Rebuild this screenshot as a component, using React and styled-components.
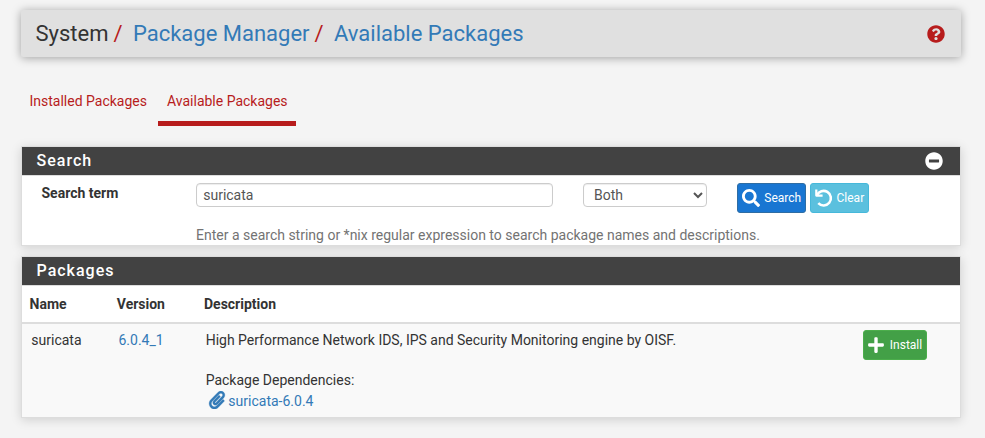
import React from "react";
import styled, { createGlobalStyle } from "styled-components";
import {
  FaQuestionCircle,
  FaMinusCircle,
  FaSearch,
  FaPlus,
  FaPaperclip,
} from "react-icons/fa";

const GlobalStyle = createGlobalStyle`
  *, *::before, *::after { box-sizing: border-box; }
  body {
    margin: 0;
    background: #f4f4f4;
    color: #333;
    font: 14px/20px Roboto, sans-serif;
  }
  a { color: #337ab7; text-decoration: none; }
  svg { display: block; flex: none; }
`;

const Page = styled.main`
  height: 438px;
  padding: 10px 24px 0 21px;
  overflow: hidden;
`;

const Header = styled.header`
  display: flex;
  align-items: center;
  justify-content: space-between;
  height: 47px;
  padding: 0 16px 0 14.5px;
  border-radius: 2px;
  background: #e0e0e0;
  box-shadow: 0 1px 10px rgba(0, 0, 0, 0.35);
`;

const Breadcrumb = styled.nav`
  display: flex;
  font-size: 22px;
  line-height: 26px;
`;

const Slash = styled.span`
  margin: 0 10.4px 0 5px;
  color: #b71c1c;
`;

const HelpLink = styled.a`
  color: #b71c1c;
  font-size: 18px;
`;

const Tabs = styled.nav`
  display: flex;
  margin-top: 24px;
`;

const Tab = styled.a`
  height: 45px;
  padding: 10px 8.5px 0;
  border-bottom: 5px solid ${(p) => (p.$active ? "#b71c1c" : "transparent")};
  color: #b71c1c;
  & + & { margin-left: 2.5px; padding: 10px 8px 0 9px; }
`;

const Panel = styled.section`
  height: ${(p) => p.$height}px;
  margin-top: ${(p) => p.$gap}px;
  border: 1px solid #ddd;
  background: #fff;
  box-shadow: 0 2px 10px rgba(0, 0, 0, 0.15);
`;

const PanelHeading = styled.div`
  display: flex;
  align-items: center;
  justify-content: space-between;
  height: 29px;
  padding: 0 16.7px 1px 14.5px;
  border-bottom: 1px solid #ddd;
  background: #424242;
  background-clip: padding-box;
  color: #fff;
  font-size: 18px;
`;

const PanelTitle = styled.h2`
  margin: 0;
  font-size: 16px;
  line-height: 20px;
  font-weight: 500;
  letter-spacing: 1px;
`;

const SearchRow = styled.form`
  display: grid;
  grid-template-columns: 154.5px 357px 124px auto;
  column-gap: 0;
  align-items: start;
  padding: 7px 0 0 19.5px;
`;

const Label = styled.label`
  font-weight: 700;
`;

const TextInput = styled.input`
  width: 357px;
  height: 24px;
  padding: 0 6.2px;
  border: 1px solid #ccc;
  border-radius: 4px;
  background: #fff;
  box-shadow: inset 0 1px 1px rgba(0, 0, 0, 0.075);
  color: #555;
  font: inherit;
  outline: none;
`;

const Select = styled.select`
  width: 124px;
  height: 24px;
  margin-left: 30px;
  padding: 0 0 0 6px;
  border: 1px solid #ccc;
  border-radius: 4px;
  background: #fff;
  box-shadow: inset 0 1px 1px rgba(0, 0, 0, 0.075);
  color: #555;
  font: inherit;
`;

const ButtonGroup = styled.div`
  display: flex;
  gap: 4px;
  margin-left: 60px;
`;

const tones = {
  primary: ["#1976d2", "#2e6da4"],
  info: ["#5bc0de", "#46b8da"],
  success: ["#43a047", "#4cae4c"],
};

const Button = styled.button`
  display: flex;
  align-items: center;
  justify-content: space-between;
  width: ${(p) => p.$width}px;
  height: 30px;
  padding: 0 3.8px 0 ${(p) => p.$inset ?? 4}px;
  border: 1px solid ${(p) => tones[p.$tone][1]};
  border-radius: 3px;
  background: ${(p) => tones[p.$tone][0]};
  color: #fff;
  font: 12px/18px Roboto, sans-serif;
  svg { font-size: 18px; }
`;

const UndoSvg = styled.svg`
  width: 18px;
  height: 18px;
  overflow: visible;
  fill: none;
  stroke: currentColor;
  stroke-width: 2.6px;
`;

const UndoIcon = () => (
  <UndoSvg viewBox="0 0 18 18" aria-hidden="true">
    <path d="M1.9 6.2A7.3 7.3 0 1 1 3.3 14.2" />
    <path d="M1.3 0.4V6.6H7.6" strokeWidth="2.2" strokeLinejoin="round" />
  </UndoSvg>
);

const ClipIcon = styled(FaPaperclip)`
  stroke: currentColor;
  stroke-width: 8px;
`;

const HelpText = styled.p`
  grid-column: 2 / -1;
  margin: 12px 0 0;
  color: #737373;
`;

const Columns = styled.div`
  display: grid;
  grid-template-columns: 87.2px 87.2px 1fr auto;
`;

const HeadRow = styled(Columns)`
  height: 38px;
  padding: 8px 8px 0 7.6px;
  border-bottom: 2px solid #ddd;
  font-weight: 700;
`;

const PackageRow = styled(Columns)`
  align-items: start;
  height: 93px;
  padding: 6px 33px 0 9.3px;
  background: #f9f9f9;
`;

const Description = styled.div`
  p { margin: 0 0 20px; }
`;

const Dependency = styled.a`
  display: flex;
  align-items: center;
  gap: 2.7px;
  padding: 1px 0 0 2px;
  svg { font-size: 18px; margin-top: -3px; }
`;

export default function App() {
  return (
    <Page>
      <GlobalStyle />
      <Header>
        <Breadcrumb>
          <span>System</span>
          <Slash>/</Slash>
          <a href="#manager">Package Manager</a>
          <Slash>/</Slash>
          <a href="#available">Available Packages</a>
        </Breadcrumb>
        <HelpLink href="#help" aria-label="Help"><FaQuestionCircle /></HelpLink>
      </Header>

      <Tabs>
        <Tab href="#installed">Installed Packages</Tab>
        <Tab href="#available" $active>Available Packages</Tab>
      </Tabs>

      <Panel $height={100} $gap={20}>
        <PanelHeading>
          <PanelTitle>Search</PanelTitle>
          <FaMinusCircle />
        </PanelHeading>
        <SearchRow onSubmit={(e) => e.preventDefault()}>
          <Label htmlFor="term">Search term</Label>
          <TextInput id="term" defaultValue="suricata" />
          <Select defaultValue="Both" aria-label="Search in">
            <option>Name</option>
            <option>Description</option>
            <option>Both</option>
          </Select>
          <ButtonGroup>
            <Button type="submit" $tone="primary" $width={69}>
              <FaSearch />Search
            </Button>
            <Button type="button" $tone="info" $width={59}>
              <UndoIcon />Clear
            </Button>
          </ButtonGroup>
          <HelpText>
            Enter a search string or *nix regular expression to search package names and descriptions.
          </HelpText>
        </SearchRow>
      </Panel>

      <Panel $height={162} $gap={10}>
        <PanelHeading>
          <PanelTitle>Packages</PanelTitle>
        </PanelHeading>
        <HeadRow>
          <span>Name</span>
          <span>Version</span>
          <span>Description</span>
        </HeadRow>
        <PackageRow>
          <span>suricata</span>
          <a href="#version">6.0.4_1</a>
          <Description>
            <p>High Performance Network IDS, IPS and Security Monitoring engine by OISF.</p>
            <div>Package Dependencies:</div>
            <Dependency href="#dependency"><ClipIcon />suricata-6.0.4</Dependency>
          </Description>
          <Button type="button" $tone="success" $width={64} $inset={2.8}>
            <FaPlus />Install
          </Button>
        </PackageRow>
      </Panel>
    </Page>
  );
}
